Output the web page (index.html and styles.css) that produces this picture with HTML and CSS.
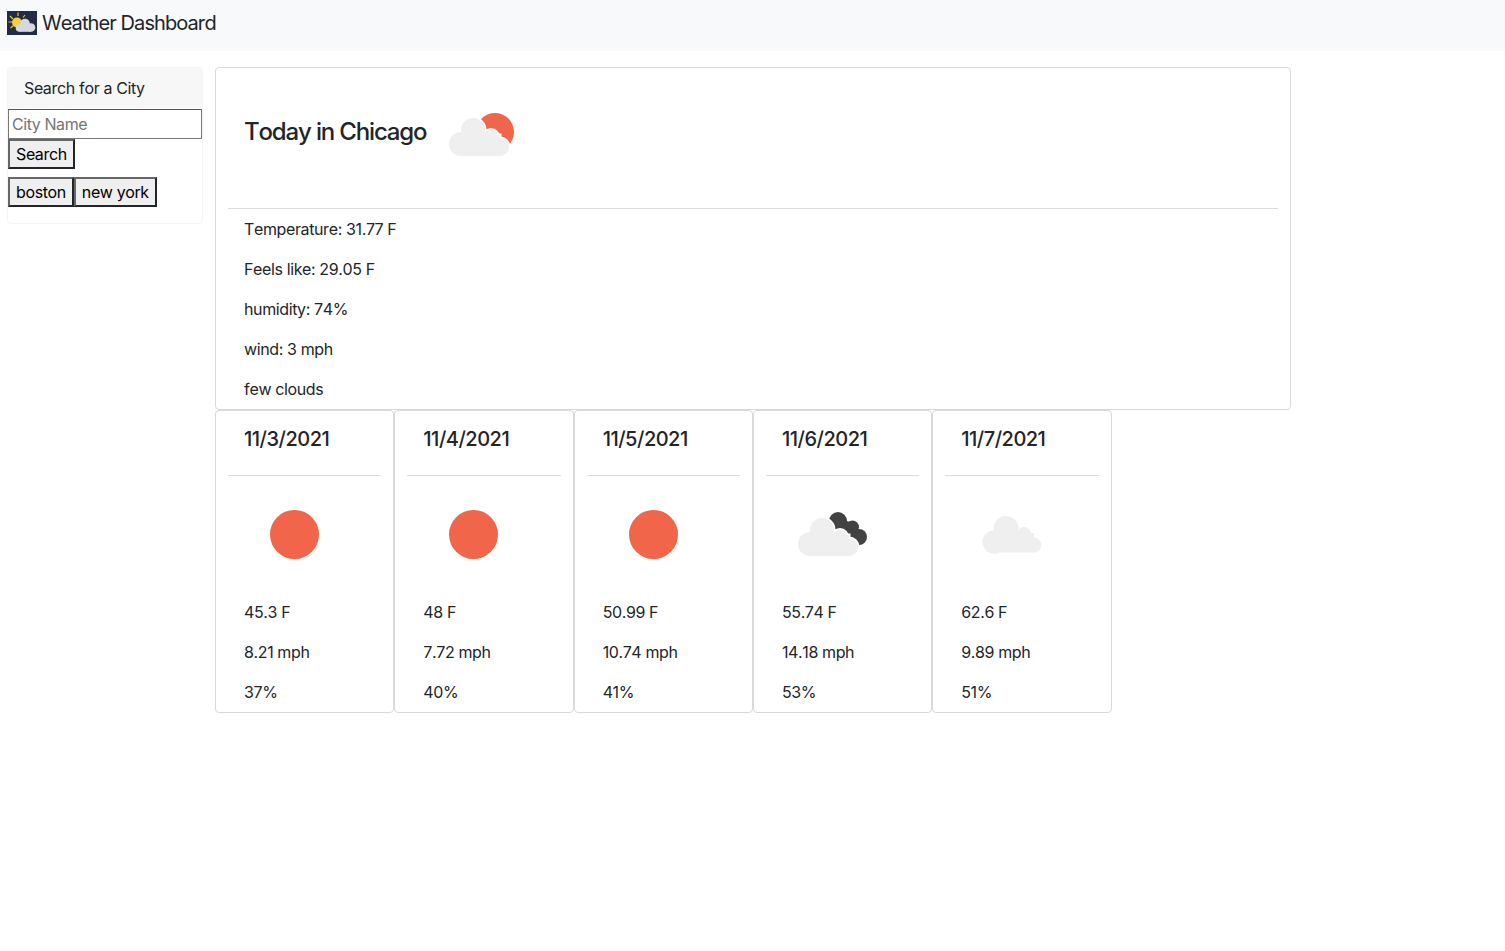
FILE: index.html
```html
<!DOCTYPE html>
<html lang="en">
<head>
<meta charset="utf-8">
<title>Weather Dashboard</title>
<link rel="stylesheet" href="styles.css">
</head>
<body>
<svg class="defs" width="0" height="0" aria-hidden="true">
  <defs>
    <symbol id="cloud" viewBox="0 0 100 100" overflow="visible">
      <circle cx="28" cy="59" r="12"/>
      <circle cx="40" cy="45" r="12"/>
      <circle cx="58" cy="52" r="7.5"/>
      <circle cx="67" cy="62" r="9"/>
      <rect x="28" y="50" width="39" height="21"/>
    </symbol>
  </defs>
</svg>
<nav class="navbar">
  <svg class="logo" viewBox="0 0 30 24">
    <rect class="logo-bg" width="30" height="24"/>
    <g class="logo-rays">
      <path d="M11 1.5V5M3 5l3 3M1.5 11H5M3.5 17l3-2.500M18 4l-2 2.500"/>
    </g>
    <circle class="logo-sun" cx="10" cy="11.500" r="5"/>
    <g class="logo-cloud">
      <circle cx="12.500" cy="17" r="3.800"/>
      <circle cx="18" cy="12.500" r="4.800"/>
      <circle cx="24" cy="16.500" r="4.300"/>
      <rect x="12.500" y="15" width="11.500" height="5.800"/>
    </g>
  </svg>
  <span class="brand">Weather Dashboard</span>
</nav>
<main class="layout">
  <aside class="search-card">
    <div class="search-head">Search for a City</div>
    <input class="city-input" type="text" placeholder="City Name">
    <div><button class="btn">Search</button></div>
    <div class="history"><button class="btn">boston</button><button class="btn">new york</button></div>
  </aside>
  <section class="content">
    <article class="today card">
      <header class="today-head">
        <h2 class="today-title">Today in Chicago</h2>
        <svg class="icon today-icon" viewBox="0 0 100 100">
          <circle class="sun" cx="62" cy="47" r="19"/>
          <use class="halo" href="#cloud"/>
          <use class="cloud" href="#cloud"/>
        </svg>
      </header>
      <div class="card-body">
        <p>Temperature: 31.77 F</p>
        <p>Feels like: 29.05 F</p>
        <p>humidity: 74%</p>
        <p>wind: 3 mph</p>
        <p>few clouds</p>
      </div>
    </article>
    <div class="forecast">
      <article class="day card">
        <h3 class="day-title">11/3/2021</h3>
        <div class="card-body">
          <svg class="icon" viewBox="0 0 100 100"><circle class="sun" cx="50.500" cy="49.500" r="24.500"/></svg>
          <p>45.3 F</p><p>8.21 mph</p><p>37%</p>
        </div>
      </article>
      <article class="day card">
        <h3 class="day-title">11/4/2021</h3>
        <div class="card-body">
          <svg class="icon" viewBox="0 0 100 100"><circle class="sun" cx="50.500" cy="49.500" r="24.500"/></svg>
          <p>48 F</p><p>7.72 mph</p><p>40%</p>
        </div>
      </article>
      <article class="day card">
        <h3 class="day-title">11/5/2021</h3>
        <div class="card-body">
          <svg class="icon" viewBox="0 0 100 100"><circle class="sun" cx="50.500" cy="49.500" r="24.500"/></svg>
          <p>50.99 F</p><p>10.74 mph</p><p>41%</p>
        </div>
      </article>
      <article class="day card">
        <h3 class="day-title">11/6/2021</h3>
        <div class="card-body">
          <svg class="icon" viewBox="0 0 100 100">
            <g class="dark">
              <circle cx="56" cy="36" r="9"/>
              <circle cx="70.500" cy="42" r="6.500"/>
              <circle cx="77" cy="52" r="8"/>
              <path d="M50 32L72 38L82 58L60 62Z"/>
            </g>
            <use class="halo" href="#cloud"/>
            <use class="cloud" href="#cloud"/>
          </svg>
          <p>55.74 F</p><p>14.18 mph</p><p>53%</p>
        </div>
      </article>
      <article class="day card">
        <h3 class="day-title">11/7/2021</h3>
        <div class="card-body">
          <svg class="icon" viewBox="0 0 100 100">
            <g class="cloud">
              <circle cx="33" cy="57" r="11.500"/>
              <circle cx="45" cy="43.500" r="12.500"/>
              <circle cx="63" cy="49" r="7"/>
              <circle cx="73" cy="60" r="7.500"/>
              <rect x="33" y="48" width="40" height="19.500"/>
            </g>
          </svg>
          <p>62.6 F</p><p>9.89 mph</p><p>51%</p>
        </div>
      </article>
    </div>
  </section>
</main>
</body>
</html>
```
FILE: styles.css
```css
* { box-sizing: border-box; }
html, body { margin: 0; padding: 0; }
body {
  font-family: Inter, "Liberation Sans", Arial, sans-serif;
  font-size: 16px;
  line-height: 24px;
  letter-spacing: -0.38px;
  font-kerning: none;
  color: #212529;
  background: #fff;
}
.defs { position: absolute; }
.navbar {
  display: flex;
  align-items: center;
  height: 51px;
  padding: 0 0 5px 7px;
  background: #f8f9fa;
}
.logo { width: 30px; height: 24px; margin-right: 5px; }
.logo-bg { fill: #232b47; }
.logo-rays path { fill: none; stroke: #f2c230; stroke-width: 1.2; }
.logo-sun { fill: #f7cf3a; }
.logo-cloud { fill: #d5d8dd; }
.brand { font-size: 20px; line-height: 30px; letter-spacing: -0.9px; }
.layout {
  display: flex;
  align-items: flex-start;
  gap: 12px;
  padding: 16px 7px 0;
}
.search-card {
  width: 196px;
  height: 157px;
  flex: none;
  border: 1px solid #f4f4f4;
  border-radius: 4px;
}
.search-head {
  height: 40px;
  padding: 8px 16px;
  background: #f7f7f7;
  border-radius: 3px 3px 0 0;
}
.city-input {
  display: block;
  width: 194px;
  height: 30px;
  margin-top: 1px;
  padding: 1px 3px;
  font: inherit;
  letter-spacing: inherit;
  color: #212529;
  border: 1px solid #767676;
  border-top-color: #555;
}
.city-input::placeholder { color: #757575; opacity: 1; }
.btn {
  height: 30px;
  padding: 1px 6px;
  font: inherit;
  letter-spacing: inherit;
  color: #000;
  background: #efefef;
  border: 2px solid;
  border-color: #666 #212529 #212529 #666;
}
.history { margin-top: 8px; display: flex; }
.content { width: 1076px; flex: none; }
.card {
  border: 1px solid #d9d9d9;
  border-radius: 4px;
  background: #fff;
  padding: 0 12px;
}
.today { height: 343px; }
.today-head {
  display: flex;
  align-items: center;
  height: 141px;
  padding: 0 0 13px 16px;
  border-bottom: 1px solid #dcdcdc;
}
.today-title { margin: 0 7px 0 0; font-size: 24px; font-weight: 500; line-height: 29px; letter-spacing: -1.15px; }
.today-icon { margin-top: 6px; }
.icon { display: block; width: 100px; height: 100px; flex: none; }
.card-body { padding: 8px 16px 0; }
.card-body p { margin: 0 0 16px; }
.forecast { display: flex; width: 896.6px; }
.day { flex: 1 1 0; height: 303px; }
.day-title {
  margin: 0;
  height: 65px;
  padding: 16px 16px 0;
  font-size: 20px;
  font-weight: 500;
  line-height: 24px;
  letter-spacing: -0.5px;
  border-bottom: 1px solid #dcdcdc;
}
.day .card-body { padding-top: 9px; }
.day .icon { margin-bottom: 15px; }
.sun { fill: #f1654a; }
.cloud { fill: #efefef; }
.halo { fill: #fff; stroke: #fff; stroke-width: 3; }
.dark { fill: #424242; }
```
